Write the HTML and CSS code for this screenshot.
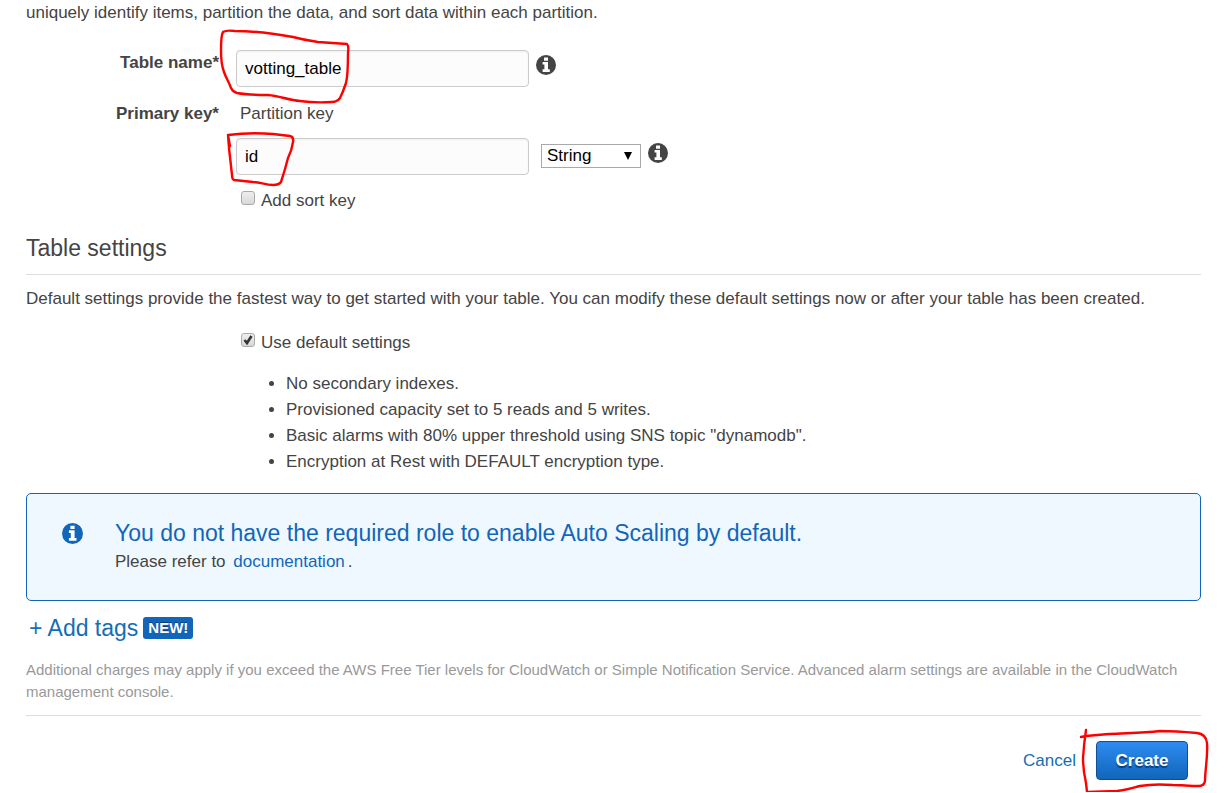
FILE: index.html
```html
<!DOCTYPE html>
<html lang="en">

<head>
  <meta charset="UTF-8">
  <meta name="viewport" content="width=device-width, initial-scale=1.0">
  <title>Create DynamoDB table</title>
  <link rel="stylesheet" href="styles.css">
</head>

<body>

  <svg class="sprites" aria-hidden="true">
    <symbol id="info" viewBox="0 0 20 20">
      <circle cx="10" cy="10" r="10" fill="currentColor" />
      <path d="M8 2.5h4v3.2H8zM6.6 7H12v7.2h1.8V17H6.6v-2.8h1.8V9.6H6.6z" fill="#fff" />
    </symbol>
  </svg>

  <form class="container">
    <p>uniquely identify items, partition the data, and sort data within each partition.</p>

    <div class="form-grid">
      <label class="field-label" for="tableName">Table name*</label>
      <div class="field-row">
        <div class="marked">
          <input type="text" id="tableName" class="text-input" value="votting_table">
          <svg class="mark mark-name" width="140" height="80" viewBox="0 0 140 80" aria-hidden="true">
            <path d="M9 6Q12 4 21 5C45 5 62 8 79 11C90 14 97 15 104 16L133 18Q135 20 134 27C134 40 134 49 132 57C130 63 128 68 126 72Q123 76 118 76Q100 77 86 75C74 74 66 70 54 69C43 69 34 69 23 67Q19 66 17 62C15 56 12 52 10 46C7 38 7 31 7 25Q7 9 9 6" />
          </svg>
        </div>
        <svg class="info-icon"><use href="#info" /></svg>
      </div>

      <label class="field-label" for="partitionKey">Primary key*</label>
      <div class="key-fields">
        <p class="key-title">Partition key</p>
        <div class="field-row">
          <div class="marked">
            <input type="text" id="partitionKey" class="text-input" value="id">
            <svg class="mark mark-id" width="80" height="60" viewBox="0 0 80 60" aria-hidden="true">
              <path d="M10 18L8 7Q30 4 53 6L70 8Q74 9 73 14Q72 22 68 30C66 38 63 48 61 54Q59 57 53 57C45 57 40 54 33 54L14 52Q12 51 12 47L9 20L8 7" />
            </svg>
          </div>
          <select class="type-select" aria-label="Key type">
            <option>String</option>
            <option>Binary</option>
            <option>Number</option>
          </select>
          <svg class="info-icon"><use href="#info" /></svg>
        </div>
        <label class="check"><input type="checkbox"> Add sort key</label>
      </div>
    </div>

    <h2>Table settings</h2>
    <p>Default settings provide the fastest way to get started with your table. You can modify these default settings now or after your table has been created.</p>

    <div class="defaults">
      <label class="check"><input type="checkbox" checked> Use default settings</label>
      <ul>
        <li>No secondary indexes.</li>
        <li>Provisioned capacity set to 5 reads and 5 writes.</li>
        <li>Basic alarms with 80% upper threshold using SNS topic "dynamodb".</li>
        <li>Encryption at Rest with DEFAULT encryption type.</li>
      </ul>
    </div>

    <div class="notice">
      <svg class="info-icon"><use href="#info" /></svg>
      <div>
        <h3>You do not have the required role to enable Auto Scaling by default.</h3>
        <p>Please refer to <a href="#" class="doc-link">documentation</a>.</p>
      </div>
    </div>

    <div class="tags">
      <a href="#">+ Add tags</a>
      <span class="badge">NEW!</span>
    </div>

    <p class="footnote">Additional charges may apply if you exceed the AWS Free Tier levels for CloudWatch or Simple Notification Service. Advanced alarm settings are available in the CloudWatch management console.</p>

    <div class="actions">
      <a href="#">Cancel</a>
      <div class="marked">
        <button type="button" class="btn-create">Create</button>
        <svg class="mark mark-create" width="132" height="66" viewBox="0 0 132 66" aria-hidden="true">
          <path d="M3 9C12 7 22 7 32 6C50 5 65 5 82 3C95 3 108 4 119 5Q128 6 129 15C130 28 127 42 127 53Q126 58 121 58C111 58 104 57 95 57C82 56 73 56 62 58C54 60 48 62 39 63L9 64L8 55C6 46 5 40 5 30Q6 15 8 2" />
        </svg>
      </div>
    </div>
  </form>

</body>

</html>
```

FILE: styles.css
```css
* {
  box-sizing: border-box;
}

body {
  margin: 0;
  font-family: "Liberation Sans", Arial, sans-serif;
  font-size: 17px;
  line-height: 26px;
  color: #444;
  background-color: #fff;
}

p,
h2,
h3,
ul {
  margin: 0;
}

a {
  color: #146eb4;
  text-decoration: none;
}

a:hover {
  text-decoration: underline;
}

.sprites {
  position: absolute;
  width: 0;
  height: 0;
}

.container {
  padding: 0 31px 12px 26px;
}

.form-grid {
  display: grid;
  grid-template-columns: 193px 1fr;
  column-gap: 17px;
  row-gap: 14px;
  margin-top: 24px;
}

.field-label {
  font-weight: bold;
  text-align: right;
}

.field-row {
  display: flex;
  align-items: flex-start;
}

.text-input {
  display: block;
  width: 293px;
  height: 37px;
  padding: 0 8px;
  border: 1px solid #ccc;
  border-radius: 4px;
  background-color: #fcfcfc;
  box-shadow: inset 0 1px 2px #eee;
  font-family: inherit;
  font-size: 17px;
  color: #000;
}

.info-icon {
  width: 20px;
  height: 20px;
  margin: 5px 0 0 7px;
  color: #444;
}

.key-title {
  padding: 0 4px;
  margin-bottom: 11px;
}

.type-select {
  appearance: none;
  width: 100px;
  height: 24px;
  margin: 6px 0 0 12px;
  padding: 0 5px;
  border: 1px solid #a9a9a9;
  border-radius: 0;
  background: #fff url("data:image/svg+xml,%3Csvg xmlns='http://www.w3.org/2000/svg' width='8' height='8'%3E%3Cpath d='M0 0h8L4 8z'/%3E%3C/svg%3E") no-repeat right 8px center;
  font-family: inherit;
  font-size: 17px;
  line-height: 22px;
  color: #000;
}

.check {
  display: flex;
  gap: 6px;
  padding-left: 5px;
}

.check input {
  appearance: none;
  width: 14px;
  height: 14px;
  margin: 3px 0 0;
  border: 1px solid #aaa;
  border-radius: 3px;
  background: linear-gradient(#eee, #d8d8d8);
}

.check input:checked {
  background: url("data:image/svg+xml,%3Csvg xmlns='http://www.w3.org/2000/svg' width='12' height='12'%3E%3Cpath d='M2.5 6l2.5 3 4.5-7' fill='none' stroke='%23333' stroke-width='2.6'/%3E%3C/svg%3E") no-repeat center, linear-gradient(#eee, #d8d8d8);
}

.key-fields .check {
  margin-top: 13px;
}

h2 {
  margin: 18px 0 11px;
  padding-bottom: 10px;
  border-bottom: 1px solid #ddd;
  font-size: 23px;
  line-height: 32px;
  font-weight: normal;
}

.defaults {
  margin: 18px 0 0 210px;
}

.defaults ul {
  margin-top: 15px;
  padding-left: 50px;
}

.notice {
  display: flex;
  gap: 32px;
  min-height: 108px;
  margin-top: 18px;
  padding: 24px 35px;
  border: 1px solid #1166bb;
  border-radius: 5px;
  background-color: #f0f8ff;
}

.notice .info-icon {
  flex: none;
  width: 21px;
  height: 21px;
  margin: 5px 0 0;
  color: #1166bb;
}

.notice h3 {
  font-size: 23px;
  line-height: 31px;
  font-weight: normal;
  color: #1166bb;
}

.doc-link {
  margin: 0 3px;
  color: #1166bb;
}

.tags {
  display: flex;
  align-items: center;
  gap: 5px;
  margin-top: 11px;
  padding-left: 3px;
  font-size: 23px;
  line-height: 32px;
}

.badge {
  padding: 0 5px;
  border-radius: 3px;
  background-color: #1166bb;
  font-size: 15px;
  line-height: 22px;
  font-weight: bold;
  color: #fff;
  text-shadow: 0 -1px 0 #0a3a70;
}

.footnote {
  margin-top: 15px;
  padding-bottom: 12px;
  border-bottom: 1px solid #ddd;
  font-size: 15px;
  line-height: 22px;
  color: #999;
}

.actions {
  display: flex;
  justify-content: flex-end;
  align-items: center;
  gap: 20px;
  margin-top: 25px;
  padding-right: 13px;
}

.btn-create {
  display: block;
  width: 92px;
  height: 39px;
  padding: 0;
  border: 1px solid #0f4f93;
  border-radius: 4px;
  background: linear-gradient(#2e8bf0, #1166bb);
  font-family: inherit;
  font-size: 17px;
  font-weight: bold;
  color: #fff;
  text-shadow: 0 2px 1px #0a3a70;
  cursor: pointer;
}

/* red pen marks drawn over the controls */
.marked {
  position: relative;
}

.mark {
  position: absolute;
  overflow: visible;
  pointer-events: none;
  fill: none;
  stroke: #f00;
  stroke-width: 2.4;
  stroke-linecap: round;
  stroke-linejoin: round;
}

.mark-name {
  top: -24px;
  left: -22px;
}

.mark-id {
  top: -10px;
  left: -16px;
}

.mark-create {
  top: -13px;
  left: -18px;
}
```
